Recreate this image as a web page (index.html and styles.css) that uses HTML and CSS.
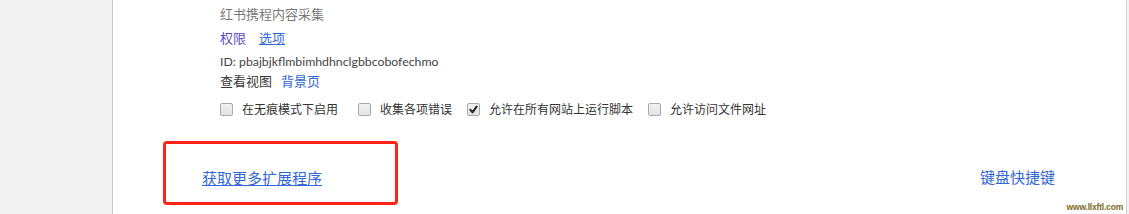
FILE: index.html
```html
<!DOCTYPE html>
<html lang="zh-CN">
<head>
<meta charset="utf-8">
<title>扩展程序</title>
<link rel="stylesheet" href="styles.css">
</head>
<body>
<div class="page">
  <aside class="sidebar"></aside>
  <main class="main">
    <section class="details">
      <div class="title">红书携程内容采集</div>
      <div class="links"><a class="link visited" href="#">权限</a><a class="link under" href="#">选项</a></div>
      <div class="id">ID: pbajbjkflmbimhdhnclgbbcobofechmo</div>
      <div class="view">查看视图<a class="link" href="#">背景页</a></div>
      <div class="checks">
        <label class="check first"><span class="box"></span>在无痕模式下启用</label>
        <label class="check"><span class="box"></span>收集各项错误</label>
        <label class="check"><span class="box checked"><svg viewBox="0 0 13 13" width="13" height="13"><path d="M3.4 6.9 L5.5 9.3 L9.6 3.6" fill="none" stroke="#2a2a2a" stroke-width="2.1" stroke-linecap="round" stroke-linejoin="round"/></svg></span>允许在所有网站上运行脚本</label>
        <label class="check"><span class="box"></span>允许访问文件网址</label>
      </div>
    </section>
    <footer class="footer">
      <div class="highlight"><a class="link under big" href="#">获取更多扩展程序</a></div>
      <a class="link big shortcut" href="#">键盘快捷键</a>
    </footer>
    <div class="watermark">www.llxftl.com</div>
  </main>
  <div class="rail"></div>
</div>
</body>
</html>
```
FILE: styles.css
```css
html, body {
  margin: 0;
  padding: 0;
  height: 214px;
  overflow: hidden;
  background: #ffffff;
  font-family: "Open Sans", "Noto Sans CJK SC", sans-serif;
}
.page {
  display: flex;
  height: 214px;
}
.sidebar {
  width: 112px;
  flex: none;
  background: #f3f3f3;
  border-right: 1px solid #c9c9c9;
}
.main {
  flex: 1;
  background: #ffffff;
  display: flex;
  flex-direction: column;
  position: relative;
}
.rail {
  width: 2px;
  flex: none;
  background: #f3f3f3;
  border-left: 1px solid #cfcfcf;
}
.details {
  padding: 4px 0 0 107px;
  font-size: 13px;
  color: #333333;
  font-family: "Open Sans", "Noto Sans CJK SC", sans-serif;
}
.title {
  line-height: 21px;
  color: #7a7a7a;
}
.links {
  margin-top: 3px;
  line-height: 21px;
  display: flex;
  gap: 13px;
}
.id {
  margin-top: 2px;
  line-height: 21px;
  font-family: "Lato", "Noto Sans CJK SC", sans-serif;
  font-size: 12.3px;
  color: #444444;
}
.view {
  line-height: 19px;
  display: flex;
  gap: 9px;
  color: #3a3a3a;
}
.link {
  color: #3367d6;
  text-decoration: none;
}
.link.visited {
  color: #5a4fc6;
}
.link.under {
  text-decoration: underline;
}
.checks {
  margin-top: 9px;
  display: flex;
  height: 19px;
  align-items: center;
  gap: 15px;
  font-size: 12px;
  color: #333333;
}
.check {
  display: flex;
  align-items: center;
  gap: 9px;
  line-height: 19px;
}
.check.first {
  margin-right: 5px;
}
.box {
  width: 11px;
  height: 11px;
  border: 1px solid #a9a9a9;
  border-radius: 2px;
  background: linear-gradient(#f0f0f0, #e4e4e4);
  position: relative;
  flex: none;
}
.box svg {
  position: absolute;
  left: -1px;
  top: -1px;
}
.footer {
  margin-top: 22px;
  display: flex;
  justify-content: space-between;
  align-items: flex-start;
  padding: 0 71px 0 50px;
}
.highlight {
  width: 193px;
  height: 20px;
  padding: 23px 0 15px 36px;
  border: 3px solid #ff2318;
  border-radius: 4px;
}
.big {
  font-size: 15px;
  line-height: 20px;
  font-family: "Noto Sans CJK SC", sans-serif;
}
.shortcut {
  margin-top: 26px;
}
.watermark {
  position: absolute;
  right: 3px;
  bottom: 2px;
  font: bold 8.5px/10px "Liberation Sans", sans-serif;
  letter-spacing: -0.2px;
  color: #7d6a1f;
  white-space: nowrap;
}
```
